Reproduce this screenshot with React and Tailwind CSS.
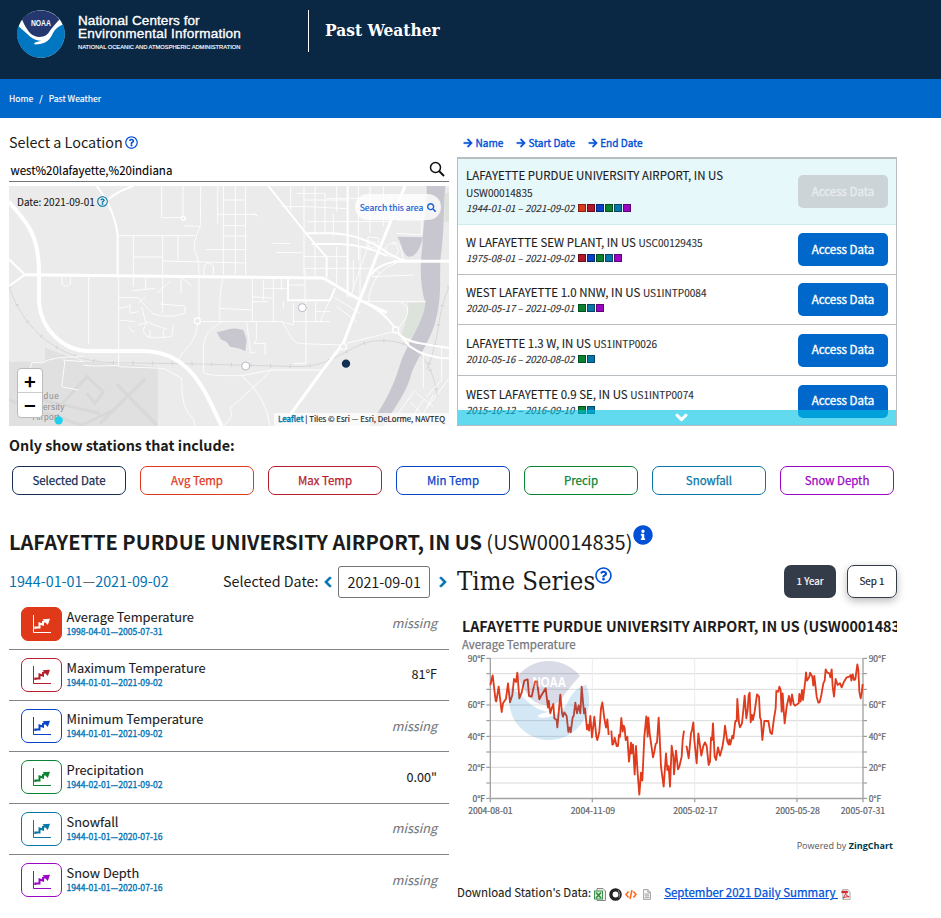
import React from "react";
import { FaArrowRight, FaChevronDown, FaChevronLeft, FaChevronRight, FaInfoCircle, FaSearch, FaRegQuestionCircle } from "react-icons/fa";

const SANS = "font-['Noto_Sans_CJK_SC','Noto_Sans',sans-serif]";

function NoaaMark({ opacity }) {
  return (
    <g opacity={opacity}>
      <circle cx="24" cy="24" r="23.700" fill="#fff" fillOpacity={opacity === 1 ? 1 : 0} />
      <path d="M5 9.400A24 24 0 0 1 42.400 9.400Q38 14 33.400 20Q30 26.500 24.400 26.800Q18 27.500 13.500 23.500Q8.500 18 5 9.400Z" fill="#24386f" />
      <path d="M1.200 16Q7 21 13 26.500Q19 31 24.400 30.800Q20 31.500 17 33L18 34.500Q24 34.500 27.400 32.800Q33 30.500 36 23Q39 17 46 14.500A24 24 0 1 1 1.200 16Z" fill="#0077c0" />
      <text x="13.900" y="15.800" fontFamily="Liberation Sans" fontSize="8.600" fontWeight="700" textLength="20" lengthAdjust="spacingAndGlyphs" fill="#fff">NOAA</text>
    </g>
  );
}

function MapCanvas() {
  return (
    <svg viewBox="27 18 1320 720" className="block h-[240px] w-[440px]" fill="none" stroke="#fff">
      <rect x="27" y="18" width="1320" height="720" fill="#ebebeb" stroke="none" />
      <path d="M27 545H135V503L250 545L473 560V738H27Z" fill="#e0e0e0" stroke="none" />
      <path d="M1335 40H1347V125H1333ZM1225 368H1278Q1262 430 1236 474H1200Q1228 410 1225 368Z" fill="#dbe3da" stroke="none" />
      <path d="M1280 18H1336C1330 80 1334 150 1322 230C1318 290 1325 340 1312 400C1300 470 1260 520 1236 575C1220 640 1185 680 1150 738H1105C1150 680 1180 620 1198 560C1220 490 1270 430 1276 370C1262 320 1258 270 1267 200C1270 120 1282 80 1280 18ZM1192 170L1268 172C1262 205 1246 232 1226 230C1206 224 1206 190 1192 170ZM650 457L676 451Q700 440 730 450L740 480L736 513L715 505L690 500L680 486L662 478Z" fill="#c8c7cf" stroke="none" />
      <g stroke="#d6d6d6" strokeWidth="9" opacity=".8">
        <path d="M170 690L260 590L310 635L285 670L260 640M350 612L470 735M300 730L436 596M125 660L300 700M240 738L340 690M27 660L250 738" />
      </g>
      <g stroke="#d3d3d3" strokeWidth="2.500">
        <path d="M27 320C70 450 180 545 340 548L600 552L900 560C1010 558 1060 480 1140 482C1260 478 1300 560 1312 650M1347 320Q1325 370 1315 440T1280 570" />
        <path strokeDasharray="3 56" strokeWidth="12" d="M27 320C70 450 180 545 340 548L600 552L900 560C1010 558 1060 480 1140 482C1260 478 1300 560 1312 650M1347 320Q1325 370 1315 440T1280 570" />
      </g>
      <g strokeWidth="3" opacity=".9">
        <path d="M485 18V113H545M549 18V108M550 137L600 139M602 18V60L601 139Q580 180 583 210Q598 235 597 280V414M356 167H585M400 167V284M488 167V284M400 231H488M488 243L740 249M534 167V243M653 18V130M670 18V284M706 18V284M737 18V284M670 60H737M653 103H770M775 110L760 100M670 137H737M670 168H740M617 209H740M612 284V258Q626 240 640 258V284M818 190H872M828 218H907M845 80H920L1040 86" />
        <path d="M872 18V90M912 18V160V284M912 60H1040M890 40H975V160M945 18V160M1010 18V95M980 55H1110M1075 18V160M1110 18V160M1150 18V140M920 125H1170M1000 100V170M945 190V290M912 230H1043M912 265H980M980 265H1110M1010 200V320M1075 160V240M1190 120H1265V165L1190 160M1170 45V140M1140 70H1200M1105 170L1138 175L1130 205L1100 198ZM1115 185L1128 189M1155 213Q1160 185 1185 192Q1208 214 1178 233Q1154 225 1155 213ZM1175 188Q1205 180 1210 240M1240 285L1115 290M1120 265L1140 280" />
        <path d="M266 284V493M356 284V560M186 290V312Q198 326 211 312V290M437 290V330M395 333L465 325M400 290V320M488 290V400M543 290V340M470 340L510 305M543 290L575 318M356 353H414Q435 378 460 402L488 408H520L555 400V378L480 372M414 370L435 350M390 370V400M356 385L390 378M390 400L415 395M356 420L405 425M425 380L438 430L430 450Q435 474 460 474L515 470L520 435M450 430L500 448M450 474V450M490 474V450M388 440Q390 455 405 455M414 435L450 425M604 425H847L880 435V370M847 425L864 455Q880 490 900 491L1025 495M880 425H990M670 290Q656 340 660 430Q614 450 610 500L610 575Q612 588 700 587H725L815 570H967M757 290V425M660 385L757 390M757 350L820 355M757 365H805M790 300V360M820 290V425M844 290V330M790 325H864M850 365V385M918 362V550H880M864 315H915M915 270V365M947 365V425M947 395H990M960 425L1005 325M1000 350L1080 400M1010 380L1070 425M1050 355L1110 180M1060 240V330M1080 200V370M740 425L752 520L769 515M769 425V480L762 490H795V525" />
        <path d="M592 435Q590 478 550 515L533 543M356 556Q270 560 250 555M90 570L95 548H130Q150 530 250 530M27 320L75 284M195 540L185 620L235 630M188 540L250 545M545 595Q542 690 580 715L585 738M815 570Q730 650 690 685Q705 710 670 738M725 587Q800 650 810 738M356 560L490 565L545 595M1040 490Q1120 470 1180 455M1190 450Q1230 410 1222 380L1200 364H1278M1200 364H1090M1105 365Q1115 270 1200 245M1250 640L1300 680M1230 665L1275 710M1245 630L1195 700M1270 660L1220 738M1300 645L1250 738M1347 595L1280 685M1270 520V625M1325 500V600L1280 650" />
      </g>
      <g strokeWidth="6">
        <path d="M290 18Q345 90 353 167V284M325 58Q350 35 400 18M75 284L27 238M75 284L27 318M864 290V361H990L1005 325M918 160H1000Q1090 165 1165 220L1205 240M935 192H1020Q1100 195 1160 228M805 18L918 160L980 232V292M1043 18V350M1080 360Q1150 390 1187 447M1187 449Q1205 480 1260 490T1347 504M1187 449L1230 500Q1280 535 1347 535M1215 240Q1130 250 1115 285" />
      </g>
      <g strokeWidth="9">
        <path d="M75 284L970 294L1080 360L1160 398M1215 18L1125 240L1030 490L967 572L870 705" />
        <path strokeWidth="12" d="M27 65C70 120 118 150 117 284V370C125 450 190 510 260 513H430C580 515 620 650 665 738" />
        <path d="M1180 244H1347" />
      </g>
      <g fill="#ebebeb" strokeWidth="4">
        <circle cx="592" cy="423" r="9" /><circle cx="550" cy="115" r="6" /><circle cx="1187" cy="450" r="9" /><circle cx="1030" cy="500" r="9" />
      </g>
      <g fill="#8b8b8b" stroke="none" fontFamily="Liberation Sans" fontSize="25">
        <text x="103" y="658" textLength="74">urdue</text>
        <text x="94" y="690" textLength="99">niversity</text>
        <text x="98" y="720" textLength="80">Airport</text>
      </g>
      <circle cx="907" cy="383" r="12" fill="#fff" stroke="#b9b9c5" strokeWidth="3" />
      <circle cx="737" cy="558" r="12" fill="#fff" stroke="#b9b9c5" strokeWidth="3" />
      <circle cx="1038" cy="551" r="12.500" fill="#112f4e" stroke="none" />
      <circle cx="176" cy="721" r="12.500" fill="#1fd0ee" stroke="none" />
    </svg>
  );
}

const SWATCH = {
  avg: "bg-[#dd3a1b]",
  max: "bg-[#b2172b]",
  min: "bg-[#0a42c8]",
  prcp: "bg-[#098331]",
  snow: "bg-[#0876a8]",
  depth: "bg-[#9a06c4]",
};

const STATIONS = [
  { name: "LAFAYETTE PURDUE UNIVERSITY AIRPORT, IN US", id: "USW00014835", range: "1944-01-01 – 2021-09-02", tags: ["avg", "max", "min", "prcp", "snow", "depth"], row: "h-[66px] bg-[#e7f8fb] border-[#c9eef2]", selected: true },
  { name: "W LAFAYETTE SEW PLANT, IN US", id: "USC00129435", range: "1975-08-01 – 2021-09-02", tags: ["max", "min", "prcp", "snow", "depth"], row: "h-[50px] border-[#b8bdc2]" },
  { name: "WEST LAFAYETTE 1.0 NNW, IN US", id: "US1INTP0084", range: "2020-05-17 – 2021-09-01", tags: ["prcp", "snow", "depth"], row: "h-[50px] border-[#b8bdc2]" },
  { name: "LAFAYETTE 1.3 W, IN US", id: "US1INTP0026", range: "2010-05-16 – 2020-08-02", tags: ["prcp", "snow"], row: "h-[51px] border-[#b8bdc2]" },
  { name: "WEST LAFAYETTE 0.9 SE, IN US", id: "US1INTP0074", range: "2015-10-12 – 2016-09-10", tags: ["prcp", "snow"], row: "h-[51px] border-[#b8bdc2]" },
];

function StationRow({ s }) {
  return (
    <div className={`flex shrink-0 items-center justify-between border-b pl-2 pr-2 ${s.row}`}>
      <div className={`whitespace-nowrap [-webkit-text-stroke:0.12px] ${s.selected ? "mb-[2px]" : ""}`}>
        <div className="text-[11.480px] leading-[17px] text-[#1b1b1b]">
          {s.name}
          {s.selected ? <br /> : " "}
          <span className="text-[10.050px] text-[#2d2e2f]">{s.id}</span>
        </div>
        <div className="flex h-[14px] items-center text-[9.650px] leading-[14px] italic text-[#2d2e2f]">
          {s.range}
          <span className="ml-[4px] flex gap-px">
            {s.tags.map((t) => (
              <i key={t} className={`block size-2 border border-black/40 ${SWATCH[t]}`} />
            ))}
          </span>
        </div>
      </div>
      <button className={`h-[33px] w-[90px] rounded-[5px] text-[11.500px] leading-none [-webkit-text-stroke:0.35px] ${s.selected ? "bg-[#cdd4d8] text-[#e8ecee]" : "bg-[#0068cb] text-white"}`}>Access Data</button>
    </div>
  );
}

const FILTERS = [
  ["Selected Date", "border-[#162e51] text-[#162e51]"],
  ["Avg Temp", "border-[#e0391a] text-[#e0391a]"],
  ["Max Temp", "border-[#b51d2d] text-[#b51d2d]"],
  ["Min Temp", "border-[#0644c8] text-[#0644c8]"],
  ["Precip", "border-[#098331] text-[#098331]"],
  ["Snowfall", "border-[#0876a8] text-[#0876a8]"],
  ["Snow Depth", "border-[#9a06c4] text-[#9a06c4]"],
];

const MEASURES = [
  ["Average Temperature", "1998-04-01—2005-07-31", "missing", "border-[#e0391a] bg-[#e0391a] text-white"],
  ["Maximum Temperature", "1944-01-01—2021-09-02", "81°F", "border-[#b51d2d] text-[#b51d2d]"],
  ["Minimum Temperature", "1944-01-01—2021-09-02", "missing", "border-[#0644c8] text-[#0644c8]"],
  ["Precipitation", "1944-02-01—2021-09-02", "0.00\"", "border-[#098331] text-[#098331]"],
  ["Snowfall", "1944-01-01—2020-07-16", "missing", "border-[#0876a8] text-[#0876a8]"],
  ["Snow Depth", "1944-01-01—2020-07-16", "missing", "border-[#9a06c4] text-[#9a06c4]"],
];

function TrendIcon() {
  return (
    <svg viewBox="0 0 18 18" className="h-[18px] w-[18px]" fill="none" stroke="currentColor">
      <path d="M.5 0V17.500H18" strokeWidth="1" />
      <path d="M2.300 14V12.500H6.500V8.500L10 9.700V7L14.500 5.500" strokeWidth="2" />
      <path d="M9.500 4.300L17 3.800L14.800 10Z" fill="currentColor" stroke="none" />
    </svg>
  );
}

const SERIES = [
  "106,135 113,106 122,183 124,184 131,140 140,216 144,190 153,176 159,130 165,187 172,165 177,117 183,126 187,98 193,175 200,158 208,122 218,118 222,168 230,170 240,124 246,124 253,178 258,168 272,145 279,203 281,182 286,220 290,205 295,192 298,235 305,240 307,262 316,164 321,220 324,230 328,217 335,228 340,276 344,262 347,277 353,232 356,228 361,188 366,220 371,196 376,220 380,140 387,220 390,205 396,268 399,255 402,272 406,228 411,292 418,230 424,290 427,300 433,275 438,205 442,187 448,235 453,263 457,238 461,285",
  "469,272 472,314 475,312 479,293 485,318 489,318 492,285 495,290 499,234 503,275 506,257 509,265 512,300 517,290 522,365 528,308 530,340 534,313 539,403 543,318 548,400 553,464 558,398 562,422 568,290 574,229 578,290 580,233 584,280 594,352 598,335 602,312 606,308 611,233 614,290 618,380 626,440 633,340 637,390 641,378 645,440 650,317 655,350 657,403 663,332 669,388 673,380 680,350 683,300 687,272",
  "693,318 695,320 701,355 708,280 711,270 715,247 718,300 725,370 730,280 739,347 745,318 750,307 755,318 761,375 765,365 768,293 771,300 774,250 779,350 783,360 789,322 795,347 802,322 807,290 810,257 817,305 821,314 823,298 826,314 832,287 835,295 841,243 845,243 847,177 852,250 855,262 861,250 865,210 869,167 874,235 878,210 881,165 884,158 887,247 891,225 894,240 899,215 906,163 912,170 915,232 918,240 922,300 928,243 940,243 946,278 951,282 957,235 962,205 964,153 970,155 973,140 977,150 980,215 983,160 986,210 989,250 995,200 1002,168 1007,195 1011,163 1016,192 1020,197 1031,190 1033,162 1037,185 1041,150 1044,180 1051,120 1053,97 1056,122 1063,110 1065,98 1072,110 1075,137 1078,108 1085,170 1090,188 1094,187 1099,165 1105,130 1109,122 1112,88 1117,98 1123,100 1126,112 1130,88 1133,140 1137,170 1142,117 1148,135 1155,130 1160,142 1167,125 1175,112 1183,110 1187,105 1189,122 1193,103 1197,120 1201,118 1207,73 1210,90 1213,155 1217,175 1220,160 1223,132",
];

function TimeSeriesChart() {
  const ys = [55, 101, 148, 195, 242, 289, 336, 382, 429];
  const labels = [["90°F", 55], ["60°F", 195], ["40°F", 289], ["20°F", 382], ["0°F", 475]];
  return (
    <svg viewBox="6 30 1320 510" className="block h-[170px] w-[440px]">
      {ys.map((y) => <path key={y} d={`M106 ${y}H1224`} stroke="#dadada" strokeWidth="3" />)}
      <path d="M412 55V475M719 55V475M1026 55V475" stroke="#ececec" strokeWidth="3" />
      {ys.concat(475).map((y) => <path key={y} d={`M94 ${y}H106M1224 ${y}H1236`} stroke="#8b8b8b" strokeWidth="3" />)}
      <path d="M106 54V487M1224 54V487M106 475.500H1224M412 475V487M719 475V487M1026 475V487" stroke="#a2a2a2" strokeWidth="4" fill="none" />
      {SERIES.map((p) => <polyline key={p} points={p} fill="none" stroke="#df3b1c" strokeWidth="5.500" strokeLinejoin="round" />)}
      <g transform="translate(163 61) scale(5)"><NoaaMark opacity={0.17} /></g>
      <g fill="#63666b" stroke="#63666b" strokeWidth=".7" fontFamily="Noto Sans CJK SC" fontSize="25.500">
        {labels.map(([t, y]) => (
          <React.Fragment key={t}>
            <text x="90" y={y + 10} textAnchor="end">{t}</text>
            <text x="1241" y={y + 10}>{t}</text>
          </React.Fragment>
        ))}
        {[["2004-08-01", 106], ["2004-11-09", 414], ["2005-02-17", 721], ["2005-05-28", 1028], ["2005-07-31", 1224]].map(([t, x]) => (
          <text key={t} x={x} y="521" textAnchor="middle" textLength="133" lengthAdjust="spacingAndGlyphs">{t}</text>
        ))}
      </g>
    </svg>
  );
}

function FileIcons() {
  return (
    <div className="mt-[3px] flex items-center">
      <svg viewBox="0 0 12 13" className="ml-[3px] h-[13px] w-3"><path d="M3 .5H9L11.500 3V12.500H3Z" fill="#eee" stroke="#888" /><rect x=".5" y="3" width="8" height="8" fill="#dcefdc" stroke="#3f9149" /><path d="M2 4.500L7 10M7 4.500L2 10" stroke="#2f8a3c" strokeWidth="1.600" /></svg>
      <svg viewBox="0 0 13 13" className="ml-[3px] size-[13px]"><circle cx="6.500" cy="6.500" r="4.600" fill="none" stroke="#222" strokeWidth="3.400" /><path d="M9 2Q12 5 10 10" fill="none" stroke="#888" /></svg>
      <svg viewBox="0 0 12 11" className="ml-[3px] h-[11px] w-3" fill="none" stroke="#ff6a1c" strokeWidth="1.600"><path d="M3.500 2.500L1 5.500L3.500 8.500M8.500 2.500L11 5.500L8.500 8.500M7 1L5 10" /></svg>
      <svg viewBox="0 0 9 12" className="ml-[6px] h-[11px] w-[8px]" fill="#f4f4f4" stroke="#999"><path d="M.5 .5H5.500L8.500 3.500V11.500H.5ZM5.500 .5V3.500H8.500M2 5.500H7M2 7.500H7M2 9.500H7" /></svg>
    </div>
  );
}

export default function App() {
  return (
    <div className={`h-[918px] w-[941px] overflow-hidden bg-white text-[#1b1b1b] ${SANS}`}>
      <header className="flex h-[79px] bg-[#0a2744] pl-[17px] pt-[10px] text-white">
        <svg viewBox="0 0 48 48" className="size-12"><NoaaMark opacity={1} /></svg>
        <div className="ml-[13px] mt-[4px] w-[230px] whitespace-nowrap font-['Liberation_Sans',sans-serif]">
          <div className="text-[13.500px] leading-[13px] tracking-[0.08px] [-webkit-text-stroke:0.35px]">National Centers for</div>
          <div className="text-[13.500px] leading-[13px] tracking-[0.22px] [-webkit-text-stroke:0.35px]">Environmental Information</div>
          <div className="mt-[3px] text-[5.750px] leading-[8px] [-webkit-text-stroke:0.15px]">NATIONAL OCEANIC AND ATMOSPHERIC ADMINISTRATION</div>
        </div>
        <div className="h-[42px] w-px bg-white" />
        <h1 className="ml-4 mt-[8px] whitespace-nowrap font-['DejaVu_Serif_Condensed','DejaVu_Serif',serif] text-[17.200px] font-bold leading-6">Past Weather</h1>
      </header>
      <nav className="flex h-[39px] items-center gap-[6px] bg-[#0068cb] pl-[9px] text-[8.650px] text-white [-webkit-text-stroke:0.15px]">
        <span>Home</span><span>/</span><span>Past Weather</span>
      </nav>
      <main className="w-[906px] pl-[9px] pt-[13px]">
        <section className="flex gap-2">
          <div className="w-[440px]">
            <div className="flex h-[22px] items-center gap-[2px] text-[14.350px]">Select a Location<FaRegQuestionCircle className="mt-px size-[13px] text-[#0050d8]" /></div>
            <div className="flex h-[29px] items-center justify-between border-b border-[#71767a] pl-[1.5px] pr-[4px] pt-[6px] text-[11.500px] text-black [-webkit-text-stroke:0.1px]">
              <span className="pt-px">west%20lafayette,%20indiana</span>
              <svg viewBox="0 0 16 16" className="mb-[2px] size-4" fill="none" stroke="#111" strokeWidth="1.500"><circle cx="6.500" cy="6.500" r="5" /><path d="M10 10L15 15" strokeWidth="2" /></svg>
            </div>
            <div className="relative mt-[4px] h-[240px] overflow-hidden">
              <MapCanvas />
              <div className="absolute left-2 top-[7.5px] flex h-4 items-center gap-[2px] text-[10px] [-webkit-text-stroke:0.1px]">Date: 2021-09-01<FaRegQuestionCircle className="size-[11px] text-[#0077a8]" /></div>
              <div className="absolute right-2 top-[8px] flex h-[26px] w-[86px] items-center justify-center gap-1 whitespace-nowrap rounded-full bg-white/80 text-[8.600px] text-[#1762d4] [-webkit-text-stroke:0.2px]">Search this area<FaSearch className="size-[9px]" /></div>
              <div className="absolute left-[8px] top-[182px] h-[50px] w-[26px] rounded border border-[#bbb] bg-white">
                <div className="flex h-6 items-center justify-center border-b border-[#ccc] text-xl font-bold text-black">+</div>
                <div className="flex h-6 items-center justify-center text-xl font-bold text-black">−</div>
              </div>
              <div className="absolute bottom-0 right-0 flex h-[13px] items-center whitespace-pre bg-white/75 px-1 pb-px text-[7.850px] text-[#222] [-webkit-text-stroke:0.15px]"><b className="font-medium text-[#0078a8] [-webkit-text-stroke:0.3px]">Leaflet</b> | Tiles © Esri — Esri, DeLorme, NAVTEQ</div>
            </div>
          </div>
          <div className="w-[440px]">
            <div className="flex h-[26px] items-center gap-[12.500px] pb-[2px] pl-[6px] text-[10.100px] text-[#0050d8] [-webkit-text-stroke:0.35px]">
              {["Name", "Start Date", "End Date"].map((t) => <span key={t} className="flex items-center gap-[2.500px]"><FaArrowRight className="h-[10px] w-[10px] stroke-current stroke-[15]" />{t}</span>)}
            </div>
            <div className="relative h-[269px] overflow-hidden border border-t-2 border-[#b8bdc2]">
              {STATIONS.map((s) => <StationRow key={s.id} s={s} />)}
              <div className="absolute inset-x-[-1px] bottom-[-1px] flex h-[16px] items-center justify-center border-b border-[#38bfd8] bg-[#00c2e3]/62 pl-2 text-white"><FaChevronDown className="size-[13px] stroke-current stroke-[40]" /></div>
            </div>
          </div>
        </section>
        <h2 className="mt-[8px] h-6 text-[14.300px] font-bold leading-[22px]">Only show stations that include:</h2>
        <div className="mt-[8px] flex gap-[14px] pl-[3px]">
          {FILTERS.map(([t, c]) => <button key={t} className={`h-[29px] w-[114px] rounded-[7px] border text-[11.450px] leading-none [-webkit-text-stroke:0.25px] ${c}`}>{t}</button>)}
        </div>
        <div className="mt-[30px] flex h-[34px] items-center whitespace-pre text-[20.030px]"><b>LAFAYETTE PURDUE UNIVERSITY AIRPORT, IN US</b> (USW00014835)<FaInfoCircle className="mb-[15px] size-[20px] text-[#0050d8]" /></div>
        <section className="mt-[6px] flex gap-2">
          <div className="w-[440px]">
            <div className="flex h-[33px] items-center whitespace-nowrap text-[14.300px]">
              <div className="w-[215px] pb-px text-[#0072b4]">1944-01-01<span className="text-[#444]">—</span>2021-09-02</div>
              <span className="pb-px">Selected Date:</span>
              <FaChevronLeft className="ml-[3px] size-3 stroke-current stroke-[40] text-[#0072b4]" />
              <div className="ml-[5px] flex h-8 w-[92px] items-center justify-center rounded-[3px] border border-[#71767a]">2021-09-01</div>
              <FaChevronRight className="ml-[7px] size-3 stroke-current stroke-[40] text-[#0072b4]" />
            </div>
            <div className="pt-[0.5px]">
              {MEASURES.map(([name, range, value, color]) => (
                <div key={name} className="flex h-[51.250px] items-center border-b border-[#80858a] pl-3 pr-3 last:border-b-0">
                  <div className={`flex h-[34px] w-[41px] items-center justify-center rounded-[7px] border ${color}`}><TrendIcon /></div>
                  <div className="mb-px ml-[4.500px] flex-1">
                    <div className="text-[12.850px] leading-[16px] [-webkit-text-stroke:0.1px]">{name}</div>
                    <div className="text-[8.600px] leading-[13px] text-[#0072b4] [-webkit-text-stroke:0.3px]">{range}</div>
                  </div>
                  <div className={value === "missing" ? "text-[12.600px] italic text-[#71767a] [-webkit-text-stroke:0.1px]" : "text-[12.600px] [-webkit-text-stroke:0.1px]"}>{value}</div>
                </div>
              ))}
            </div>
          </div>
          <div className="w-[440px]">
            <div className="flex h-[33px] items-center">
              <div className="flex items-center whitespace-nowrap font-['DejaVu_Serif_Condensed','DejaVu_Serif',serif] text-[25.500px]">Time Series<FaRegQuestionCircle className="mb-3 size-[17px] text-[#0050d8]" /></div>
              <button className="ml-auto h-[33px] w-[52px] rounded-[7px] bg-[#343b49] text-[9.800px] text-white [-webkit-text-stroke:0.2px]">1 Year</button>
              <button className="ml-[11px] h-[33px] w-[50px] rounded-[7px] border border-[#343b49] text-[9.800px] shadow-[0_3px_8px_rgba(0,0,0,0.28)] [-webkit-text-stroke:0.2px]">Sep 1</button>
            </div>
            <div className="mt-[18px] h-5 overflow-hidden whitespace-nowrap pl-[5px] text-[14.300px] font-bold leading-5">LAFAYETTE PURDUE UNIVERSITY AIRPORT, IN US (USW00014835)</div>
            <div className="h-[14px] whitespace-nowrap pl-[5px] text-[11.450px] leading-[16px] text-[#74787d] [-webkit-text-stroke:0.25px]">Average Temperature</div>
            <TimeSeriesChart />
            <div className="mt-[18px] flex h-4 items-center justify-end whitespace-pre pr-[4px] font-['Open_Sans',sans-serif] text-[9.050px] text-[#555]">Powered by <b className="text-[#003849]">ZingChart</b></div>
            <div className="mt-[29px] flex h-[20px] items-center whitespace-nowrap text-[11.480px] [-webkit-text-stroke:0.08px]">Download Station's Data:<FileIcons />
              <span className="ml-[13px] whitespace-pre text-[#0050d8] underline [-webkit-text-stroke:0.25px]">September 2021 Daily Summary </span>
              <svg viewBox="0 0 10 12" className="ml-[3px] mt-[3px] h-[11px] w-[10px]"><path d="M1.500 .5H7L9.500 3.500V11.500H1.500Z" fill="#eee" stroke="#aaa" /><rect y="2" width="7" height="2.500" fill="#d52832" /><path d="M2 10Q5 5 4.500 4.500Q5 8 8.500 8.500Q4 8 2 10Z" fill="none" stroke="#d52832" /></svg>
            </div>
          </div>
        </section>
      </main>
    </div>
  );
}
